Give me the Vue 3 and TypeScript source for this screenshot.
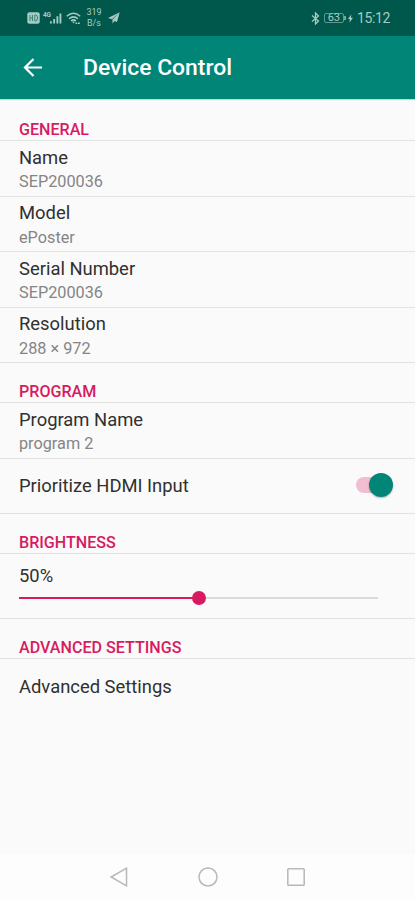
<script setup lang="ts">
import { ref } from 'vue'

interface Item { title: string; value?: string; kind: 'info' | 'switch' | 'slider' | 'link'; height: number }
interface Section { heading: string; height: number; items: Item[] }

const enabled = ref(true)
const brightness = ref(50)

const sections: Section[] = [
  {
    heading: 'GENERAL', height: 41, items: [
      { title: 'Name', value: 'SEP200036', kind: 'info', height: 56 },
      { title: 'Model', value: 'ePoster', kind: 'info', height: 55 },
      { title: 'Serial Number', value: 'SEP200036', kind: 'info', height: 56 },
      { title: 'Resolution', value: '288 × 972', kind: 'info', height: 55 },
    ],
  },
  {
    heading: 'PROGRAM', height: 40, items: [
      { title: 'Program Name', value: 'program 2', kind: 'info', height: 56 },
      { title: 'Prioritize HDMI Input', kind: 'switch', height: 55 },
    ],
  },
  { heading: 'BRIGHTNESS', height: 40, items: [{ title: '50%', kind: 'slider', height: 65 }] },
  { heading: 'ADVANCED SETTINGS', height: 40, items: [{ title: 'Advanced Settings', kind: 'link', height: 55 }] },
]
</script>

<template>
  <div class="screen">
    <div class="status">
      <svg class="hd" width="13" height="12" viewBox="0 0 13 12"><rect x=".3" y=".3" width="12.4" height="11.4" rx="2" fill="currentColor" /><path d="M3 3v6M3 6h2.5M5.5 3v6M7.8 3v6h.8q2 0 2-3t-2-3z" fill="none" stroke="#3f8378" stroke-width="1" /></svg>
      <div class="signal">
        <span class="net">4G</span>
        <svg width="12" height="12" viewBox="0 0 13 12" fill="currentColor"><path d="M0 9.500h2V12H0zM3.500 7h2v5h-2zM7 4h2v8H7zM10.300 1h2v11h-2z" /></svg>
      </div>
      <svg class="wifi" width="15" height="13" viewBox="0 0 15 13" fill="none" stroke="currentColor" stroke-width="1.500"><path d="M.8 4.300Q7.500-1.700 14.200 4.300M3 6.800q4.500-3.900 9 0M5 9q2.500-2.200 5 0" /><path d="M6 9.500h3l-1.500 2z" fill="currentColor" stroke="none" /><path d="M9.500 11.300h4.500" stroke-dasharray="1.800 .7" /></svg>
      <div class="speed"><span>319</span><span>B/s</span></div>
      <svg class="plane" width="12" height="12" viewBox="0 0 12 12" fill="currentColor"><path d="M11.700.3 0 6l4 1.300zM11.700.3 4.400 7.800l.2 3.700L6.500 9 9 10z" /></svg>
      <span class="space"></span>
      <svg class="bt" width="9" height="13" viewBox="0 0 9 13" fill="none" stroke="currentColor" stroke-width="1.300"><path d="M1 3.500 7.500 9 4.500 12V1l3 3L1 9.500" /></svg>
      <div class="battery"><span>63</span></div>
      <svg class="bolt" width="5" height="9" viewBox="0 0 6 10" fill="currentColor"><path d="M4 0 0 5.700h2.300L1.600 10 6 4H3.400z" /></svg>
      <span class="time">15:12</span>
    </div>

    <header class="bar">
      <svg width="20" height="20" viewBox="0 0 20 20" fill="none" stroke="currentColor" stroke-width="2.200"><path d="M19 9.500H2.500M10.500 1 2 9.500l8.500 8.500" /></svg>
      <h1>Device Control</h1>
    </header>

    <main>
      <section v-for="s in sections" :key="s.heading">
        <h2 :style="{ height: s.height + 'px' }"><span>{{ s.heading }}</span></h2>
        <div v-for="i in s.items" :key="i.title" :class="['row', i.kind]" :style="{ height: i.height + 'px' }">
          <template v-if="i.kind === 'slider'">
            <span class="title">{{ brightness }}%</span>
            <div class="track">
              <div class="fill" :style="{ width: brightness + '%' }"></div>
              <div class="knob"></div>
            </div>
          </template>
          <template v-else>
            <span class="title">{{ i.title }}</span>
            <span v-if="i.value" class="value">{{ i.value }}</span>
            <button v-if="i.kind === 'switch'" :class="['toggle', { on: enabled }]" role="switch" :aria-checked="enabled" @click="enabled = !enabled"><span></span></button>
          </template>
        </div>
      </section>
    </main>

    <nav>
      <svg width="18" height="20" viewBox="0 0 18 20"><path d="M16.500 1.200v17.600L1.200 10z" /></svg>
      <svg width="20" height="20" viewBox="0 0 20 20"><circle cx="10" cy="10" r="9" /></svg>
      <svg width="18" height="18" viewBox="0 0 18 18"><rect x=".8" y=".8" width="16.400" height="16.400" rx=".8" /></svg>
    </nav>
  </div>
</template>

<style>
body { background: #fafafa; }
</style>

<style scoped>
.screen { width: 415px; height: 900px; display: flex; flex-direction: column; overflow: hidden; background: #fafafa; font-family: Roboto, sans-serif; color: #303030; }
.screen * { box-sizing: border-box; }
svg { display: block; flex: none; }
.status { height: 36px; flex: none; display: flex; align-items: center; padding: 0 25px 0 27px; background: #00574b; color: #a6cbc4; }
.signal { display: flex; margin-left: 3px; }
.net { font-size: 6.500px; font-weight: 700; line-height: 7px; width: 7px; letter-spacing: -.3px; }
.wifi { margin-left: 4px; }
.speed { display: flex; flex-direction: column; align-items: center; width: 16px; margin-left: 5px; font-size: 9px; line-height: 11px; }
.plane { margin-left: 6px; }
.space { flex: 1; }
.battery { width: 20px; height: 10px; margin-left: 4px; border: 1px solid #5f988e; border-radius: 2px; display: flex; align-items: center; justify-content: center; font-size: 11px; line-height: 10px; position: relative; }
.battery::after { content: ''; position: absolute; right: -3px; top: 2px; width: 2px; height: 4px; background: #72a79e; }
.bolt { margin: 0 4px; }
.time { font-size: 14px; letter-spacing: -.35px; }
.bar { height: 63px; flex: none; display: flex; align-items: center; padding: 1px 0 0 23px; background: #008577; color: #fff; box-shadow: 0 1px 1px #c5d5d2; position: relative; }
h1 { margin: 0 0 0 40px; font-size: 22.900px; font-weight: 500; line-height: 28px; white-space: nowrap; }
main { flex: 1; padding-top: 1px; }
h2 { margin: 0; padding: 19px 19px 0; border-bottom: 1px solid #e2e2e2; color: #d81b60; font-size: 16.100px; line-height: 20px; font-weight: 500; }
section:first-child h2 { padding-top: 20px; }
h2 span, .title, .value { display: block; white-space: nowrap; }
.row { display: flex; padding: 0 19px; border-bottom: 1px solid #e2e2e2; }
.info { flex-direction: column; }
.title { font-size: 18.400px; line-height: 22px; }
.info .title { margin-top: 6px; }
.info:nth-child(odd) .title { margin-top: 5px; }
.value { margin-top: 2px; font-size: 16.250px; line-height: 21px; color: #858585; }
.info:nth-child(odd) .value { margin-top: 3px; }
.switch { align-items: center; justify-content: space-between; padding-right: 22px; }
.link { align-items: center; border-bottom: 0; }
.toggle { width: 37px; height: 24px; margin-top: -2px; padding: 0; border: 0; background: none; display: flex; align-items: center; }
.toggle::before { content: ''; width: 32px; height: 16px; margin-right: -32px; border-radius: 8px; background: #f1bdd0; flex: none; }
.toggle span { width: 24px; height: 24px; border-radius: 50%; background: #fff; box-shadow: 0 1px 2px #0004; position: relative; }
.toggle.on span { margin-left: 13px; background: #008577; }
.slider { flex-direction: column; padding-top: 11px; }
.track { width: 359px; height: 14px; margin-top: 4px; display: flex; align-items: center; background: linear-gradient(#dadada, #dadada) 0 6px / 100% 2px no-repeat; }
.fill { height: 2px; background: #d81b60; }
.knob { width: 14px; height: 14px; margin-left: -7px; border-radius: 50%; background: #d81b60; }
nav { height: 46px; flex: none; display: flex; align-items: center; justify-content: space-between; padding: 0 110px; background: #fdfdfd; }
nav svg { fill: none; stroke: #b8b8b8; stroke-width: 1.500; }
</style>
